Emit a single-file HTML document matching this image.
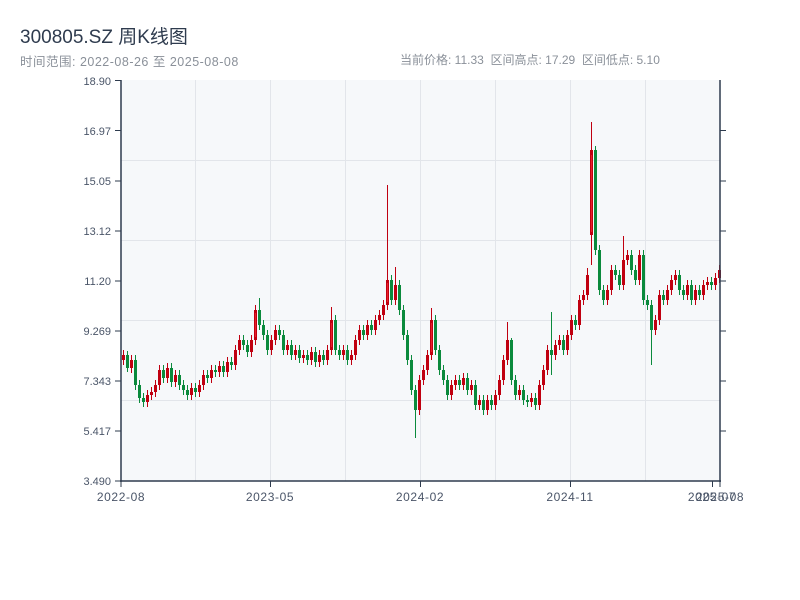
<!DOCTYPE html>
<html><head><meta charset="utf-8"><style>
body{margin:0;background:#fff;width:800px;height:600px;overflow:hidden;font-family:"Liberation Sans","Noto Sans CJK SC",sans-serif}
.t{position:absolute;left:20px;top:22px;font-size:19px;color:#2e3b4e}
.s{position:absolute;top:51px;font-size:12px;color:#8a9099}
</style></head><body>
<div class="t">300805.SZ 周K线图</div>
<div class="s" style="left:20px;font-size:12.5px;letter-spacing:0.5px">时间范围: 2022-08-26 至 2025-08-08</div>
<div class="s" style="left:400px">当前价格: 11.33 &nbsp;区间高点: 17.29 &nbsp;区间低点: 5.10</div>
<svg width="800" height="600" style="position:absolute;left:0;top:0" font-family="Liberation Sans, sans-serif" font-size="11" fill="#4a5568">
<rect x="121" y="80" width="599" height="401" fill="#f6f8fa"/>
<g stroke="#e2e5ea" stroke-width="1">
<line x1="195.5" y1="80" x2="195.5" y2="481"/><line x1="270.5" y1="80" x2="270.5" y2="481"/><line x1="345.5" y1="80" x2="345.5" y2="481"/><line x1="420.5" y1="80" x2="420.5" y2="481"/><line x1="495.5" y1="80" x2="495.5" y2="481"/><line x1="570.5" y1="80" x2="570.5" y2="481"/><line x1="645.5" y1="80" x2="645.5" y2="481"/>
<line x1="121" y1="160.5" x2="720" y2="160.5"/><line x1="121" y1="240.5" x2="720" y2="240.5"/><line x1="121" y1="320.5" x2="720" y2="320.5"/><line x1="121" y1="400.5" x2="720" y2="400.5"/>
</g>
<g transform="translate(0.5,0)" fill="none">
<path stroke="#c00010" stroke-width="1" d="M123 350V365M131 355V373M147 390V407M151 387V400M155 380V397M159 365V390M167 363V383M175 370V387M191 383V400M199 380V397M203 370V390M211 365V383M219 361V377M227 357V377M235 345V370M239 335V355M251 335V357M255 305V345M271 335V355M275 325V345M287 340V355M295 345V360M303 350V363M311 347V365M319 350V367M327 345V365M331 307V355M343 345V360M351 350V365M355 335V360M359 325V345M367 320V340M375 315V335M379 310V325M383 300V320M387 185V310M395 267V305M419 375V415M423 365V385M427 350V375M431 308V360M451 380V400M455 375V390M463 373V390M471 380V395M479 395V410M487 395V415M495 390V410M499 375V400M503 355V385M507 322V365M519 385V400M531 393V407M539 380V410M543 365V390M547 345V375M555 340V360M559 335V350M567 330V355M571 315V340M579 295V330M583 290V305M587 268V300M591 122V265M607 285V305M611 265V295M623 236V290M627 250V265M639 250V285M655 315V335M659 290V325M667 285V305M671 275V295M675 270V285M687 280V300M695 285V305M703 280V300M707 277V290M715 273V290M719 265V283"/>
<path stroke="#c00010" stroke-width="3" d="M123 355V360M131 360V368M147 395V402M151 392V395M155 385V392M159 370V385M167 368V378M175 375V382M191 388V395M199 385V392M203 375V385M211 370V378M219 366V372M227 362V372M235 350V365M239 340V350M251 340V352M255 310V340M271 340V350M275 330V340M287 345V350M295 350V355M303 355V358M311 352V360M319 355V362M327 350V360M331 320V350M343 350V355M351 355V360M355 340V355M359 330V340M367 325V335M375 320V330M379 315V320M383 305V315M387 280V305M395 285V300M419 380V410M423 370V380M427 355V370M431 320V355M451 385V395M455 380V385M463 378V385M471 385V390M479 400V405M487 400V410M495 395V405M499 380V395M503 360V380M507 340V360M519 390V395M531 398V402M539 385V405M543 370V385M547 350V370M555 345V355M559 340V345M567 335V350M571 320V335M579 300V325M583 295V300M587 275V295M591 150V235M607 290V300M611 270V290M623 260V285M627 255V260M639 255V280M655 320V330M659 295V320M667 290V300M671 280V290M675 275V280M687 285V295M695 290V300M703 285V295M707 282V285M715 278V285M719 270V278"/>
<path stroke="#e8202a" stroke-width="1" d="M591 155V232M387 283V302M255 313V337M331 323V347M431 323V352"/>
<path stroke="#0a8a3c" stroke-width="1" d="M127 351V372M135 355V390M139 380V403M143 393V407M163 365V383M171 363V387M179 370V390M183 380V395M187 385V400M195 383V397M207 370V383M215 365V377M223 361V377M231 357V370M243 335V350M247 340V357M259 298V330M263 320V340M267 330V355M279 325V340M283 330V355M291 340V360M299 345V363M307 350V365M315 347V367M323 350V365M335 315V355M339 345V360M347 345V365M363 325V340M371 320V335M391 275V305M399 280V315M403 305V340M407 330V365M411 355V395M415 385V438M435 315V355M439 345V375M443 365V385M447 375V400M459 375V390M467 373V395M475 380V410M483 395V415M491 395V410M511 338V385M515 375V400M523 385V405M527 395V407M535 393V410M551 312V375M563 335V355M575 315V330M595 146V255M599 245V295M603 285V305M615 265V280M619 270V290M631 250V275M635 265V285M643 250V305M647 295V310M651 300V365M663 290V305M679 270V295M683 285V300M691 280V305M699 285V300M711 277V290"/>
<path stroke="#0a8a3c" stroke-width="3" d="M127 355V368M135 360V385M139 385V398M143 398V402M163 370V378M171 368V382M179 375V385M183 385V390M187 390V395M195 388V392M207 375V378M215 370V372M223 366V372M231 362V365M243 340V345M247 345V352M259 310V325M263 325V335M267 335V350M279 330V335M283 335V350M291 345V355M299 350V358M307 355V360M315 352V362M323 355V360M335 320V350M339 350V355M347 350V360M363 330V335M371 325V330M391 280V300M399 285V310M403 310V335M407 335V360M411 360V390M415 390V410M435 320V350M439 350V370M443 370V380M447 380V395M459 380V385M467 378V390M475 385V405M483 400V410M491 400V405M511 340V380M515 380V395M523 390V400M527 400V402M535 398V405M551 350V355M563 340V350M575 320V325M595 150V250M599 250V290M603 290V300M615 270V275M619 275V285M631 255V270M635 270V280M643 255V300M647 300V305M651 305V330M663 295V300M679 275V290M683 290V295M691 285V300M699 290V295M711 282V285"/>
</g>
<g stroke="#2e3b4e" stroke-width="1.5" fill="none">
<line x1="121" y1="80" x2="121" y2="482"/><line x1="120" y1="481" x2="721" y2="481"/><line x1="720" y1="80" x2="720" y2="482"/>
</g>
<g stroke="#2e3b4e" stroke-width="1">
<line x1="115" y1="80.5" x2="121" y2="80.5"/><line x1="115" y1="130.5" x2="121" y2="130.5"/><line x1="115" y1="181" x2="121" y2="181"/><line x1="115" y1="231" x2="121" y2="231"/><line x1="115" y1="281" x2="121" y2="281"/><line x1="115" y1="331" x2="121" y2="331"/><line x1="115" y1="381" x2="121" y2="381"/><line x1="115" y1="431" x2="121" y2="431"/><line x1="115" y1="481" x2="121" y2="481"/>
<line x1="720" y1="130.5" x2="726" y2="130.5"/><line x1="720" y1="181" x2="726" y2="181"/><line x1="720" y1="231" x2="726" y2="231"/><line x1="720" y1="281" x2="726" y2="281"/><line x1="720" y1="331" x2="726" y2="331"/><line x1="720" y1="381" x2="726" y2="381"/><line x1="720" y1="431" x2="726" y2="431"/>
<line x1="121" y1="481" x2="121" y2="487"/><line x1="270.5" y1="481" x2="270.5" y2="487"/><line x1="420.5" y1="481" x2="420.5" y2="487"/><line x1="570.5" y1="481" x2="570.5" y2="487"/><line x1="712.5" y1="481" x2="712.5" y2="487"/><line x1="720" y1="481" x2="720" y2="487"/>
</g>
<g text-anchor="end">
<text x="111" y="85">18.90</text><text x="111" y="135">16.97</text><text x="111" y="185">15.05</text><text x="111" y="235">13.12</text><text x="111" y="285">11.20</text><text x="111" y="335">9.269</text><text x="111" y="385">7.343</text><text x="111" y="435">5.417</text><text x="111" y="485">3.490</text>
</g>
<g text-anchor="middle" font-size="12" letter-spacing="0.6">
<text x="121" y="501">2022-08</text><text x="270" y="501">2023-05</text><text x="420" y="501">2024-02</text><text x="570" y="501">2024-11</text><text x="712" y="501">2025-07</text><text x="720" y="501">2025-08</text>
</g>
</svg>
</body></html>
